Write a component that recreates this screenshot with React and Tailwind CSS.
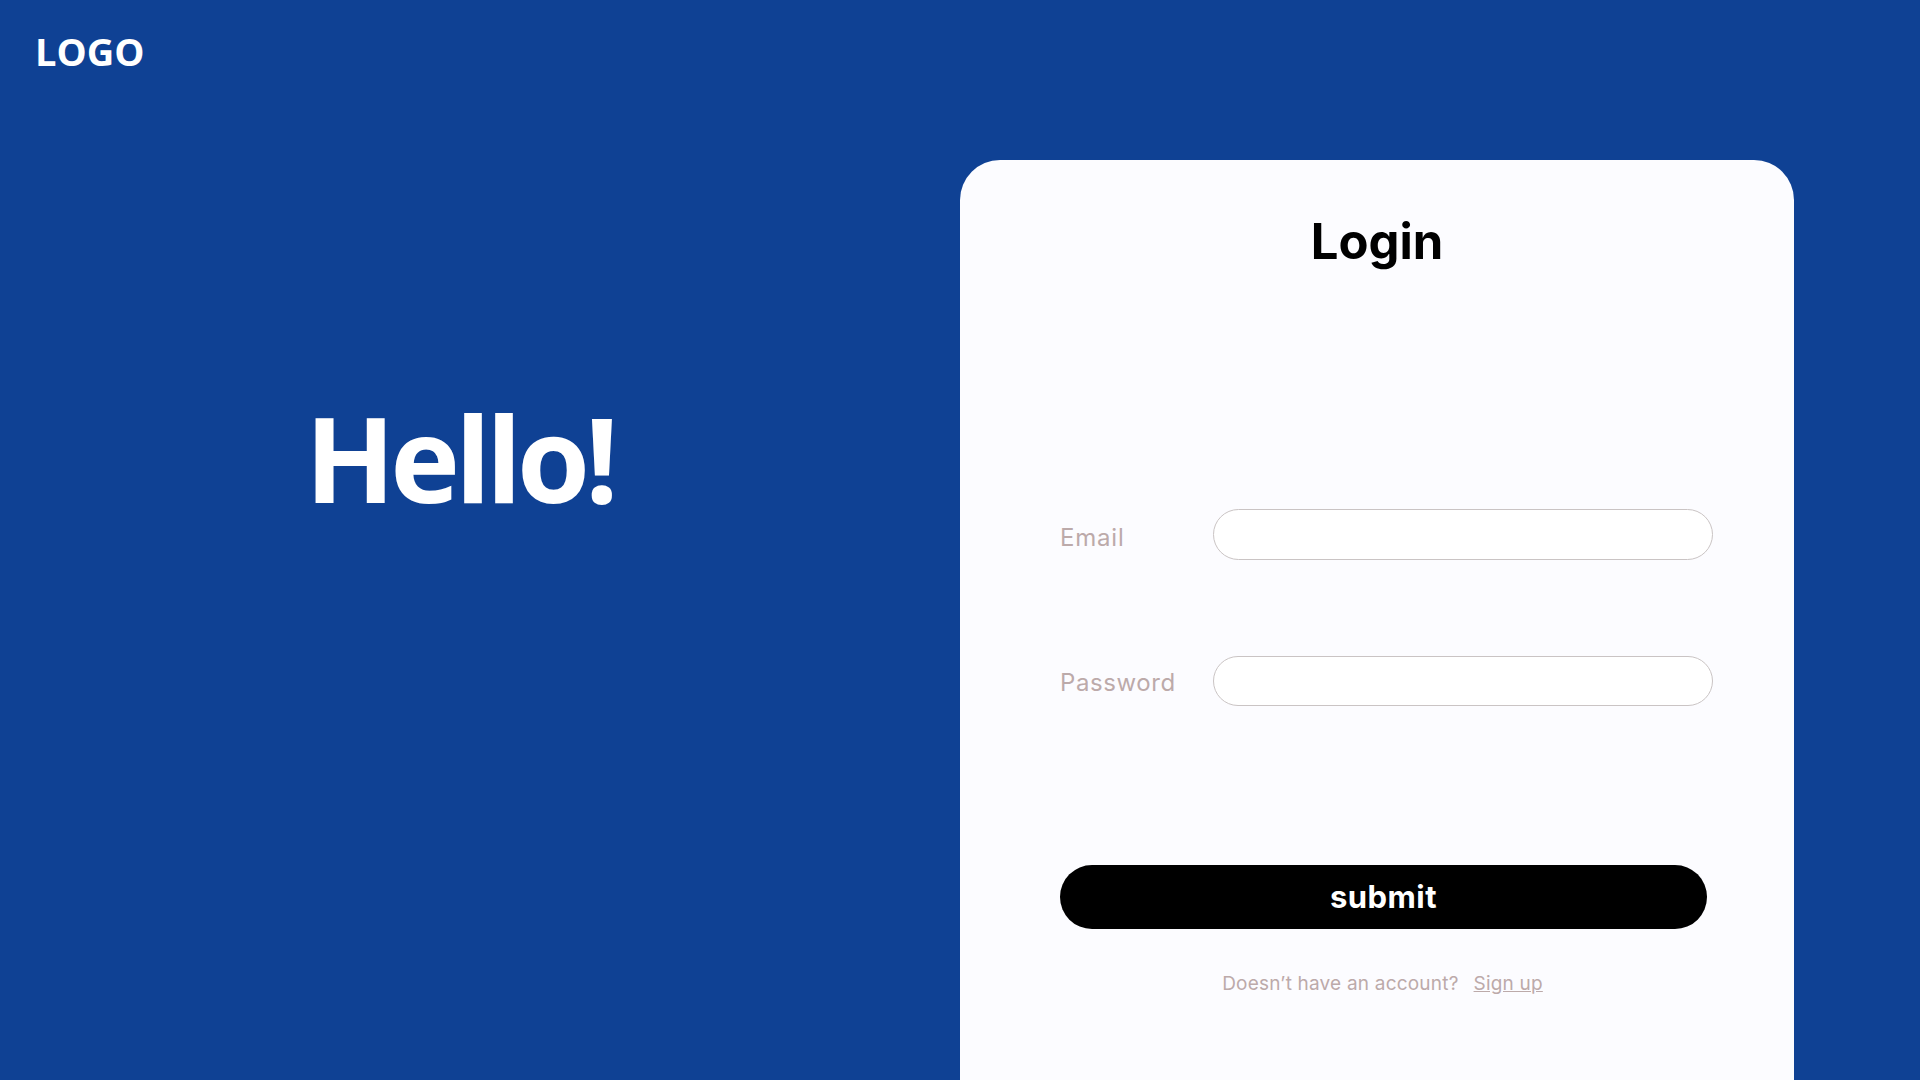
export default function App() {
  return (
    <div className="flex h-[1080px] w-[1920px] overflow-hidden bg-[#0f4194]">
      <div className="flex w-[960px] flex-col">
        <div className="pl-[35px] pt-[34px] text-[38px] font-bold leading-[35px] text-white" style={{ fontFamily: '"Open Sans", sans-serif' }}>
          LOGO
        </div>
        <div className="pl-[305px] pt-[330px] text-[118px] font-bold leading-[118px] tracking-[-5px] text-white" style={{ fontFamily: '"Open Sans", sans-serif' }}>
          Hello!
        </div>
      </div>
      <div className="pt-[160px]">
        <div className="flex h-full w-[834px] flex-col rounded-t-[40px] bg-[#fcfcff]" style={{ fontFamily: 'Inter, sans-serif' }}>
          <div className="pt-[57px] text-center text-[49px] font-bold leading-[50px] text-black">Login</div>
          <div className="mt-[242px] flex h-[51px] items-center pl-[100px] pr-[81px]">
            <label className="w-[153px] pt-[6px] text-[24px] tracking-[0.8px] text-[#bcaaaa]">Email</label>
            <input className="h-[51px] flex-1 rounded-full border border-[#cac4c4] bg-white px-5 outline-none" />
          </div>
          <div className="mt-[96px] flex h-[50px] items-center pl-[100px] pr-[81px]">
            <label className="w-[153px] pt-[4px] text-[24px] tracking-[0.6px] text-[#bcaaaa]">Password</label>
            <input type="password" className="h-[50px] flex-1 rounded-full border border-[#cac4c4] bg-white px-5 outline-none" />
          </div>
          <div className="mt-[159px] pl-[100px]">
            <button className="h-[64px] w-[647px] rounded-[32px] bg-black text-[31px] font-bold tracking-[0.5px] text-white">submit</button>
          </div>
          <div className="mt-[43px] flex justify-center gap-[15px] pl-[11px] text-[19px] leading-[24px] tracking-[0.2px] text-[#bcaaaa]">
            <span>Doesn’t have an account?</span>
            <a className="underline">Sign up</a>
          </div>
        </div>
      </div>
    </div>
  );
}
